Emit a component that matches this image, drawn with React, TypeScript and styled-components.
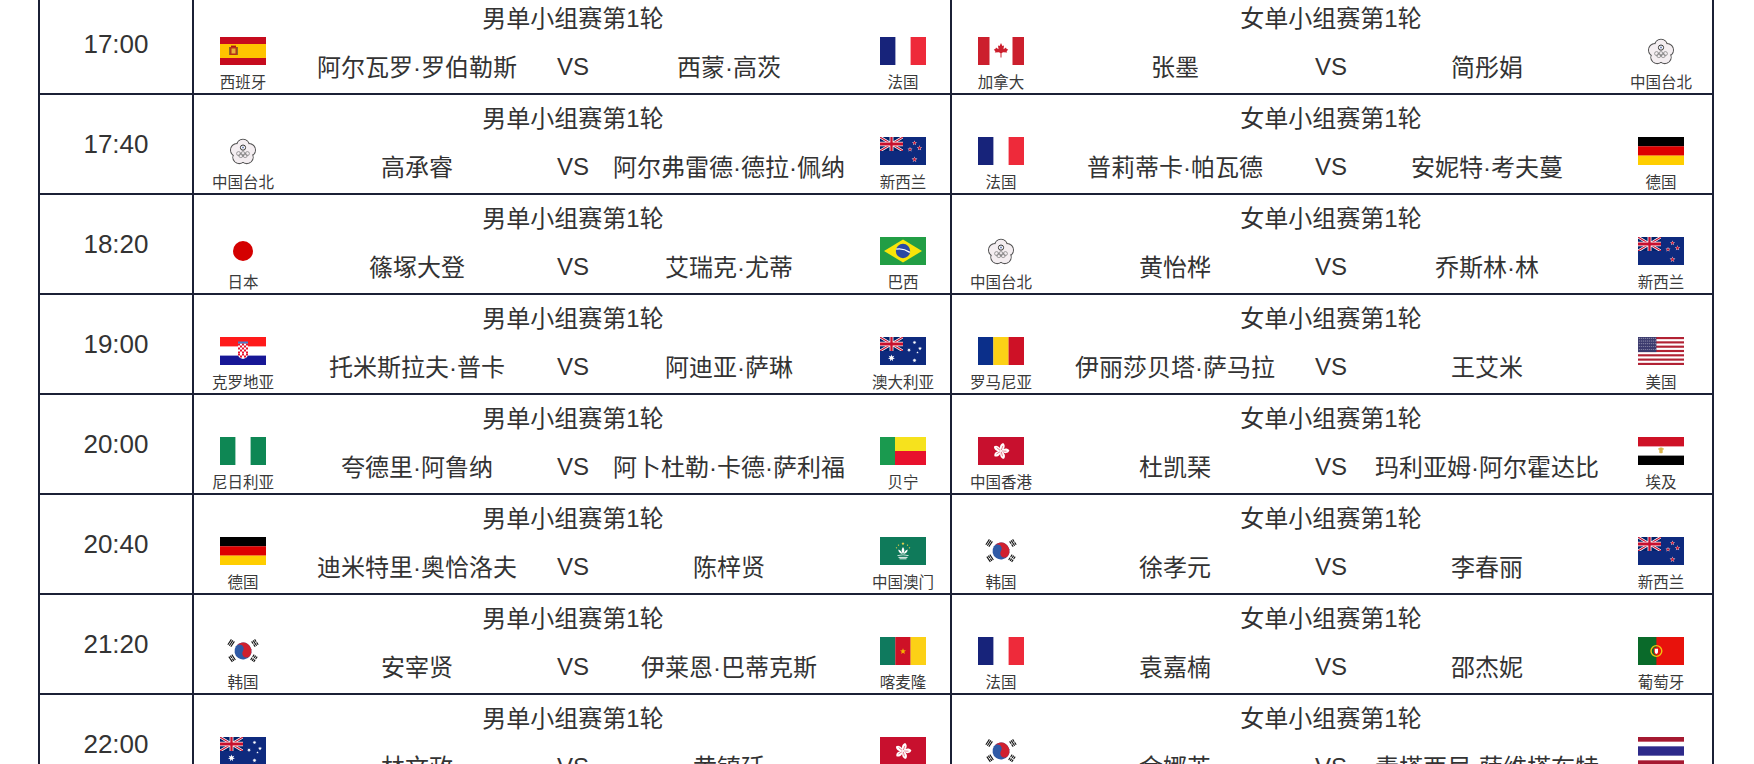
import React from "react";
import styled, { createGlobalStyle } from "styled-components";

const GlobalStyle = createGlobalStyle`
  html, body { margin: 0; padding: 0; background: #ffffff; overflow: hidden; }
  body { font-family: "Liberation Sans", "Noto Sans CJK SC", sans-serif; color: #333333; }
`;

const LINE = "#1b2035";

const Table = styled.div`
  margin: -5px 0 0 38px;
  width: 1676px;
  box-sizing: border-box;
  border-left: 2px solid ${LINE};
  border-right: 2px solid ${LINE};
`;

const Row = styled.div`
  display: grid;
  grid-template-columns: 152px 758px 758px;
  height: 100px;
  box-sizing: border-box;
  border-bottom: 2px solid ${LINE};
`;

const TimeCell = styled.div`
  display: flex;
  align-items: center;
  justify-content: center;
  font-family: "Liberation Sans", Arial, sans-serif;
  font-size: 26px;
  color: #333333;
`;

const MatchCell = styled.div`
  border-left: 2px solid ${LINE};
  display: grid;
  grid-template-columns: 98px 250px 62px 250px 98px;
  grid-template-rows: 42px 56px;
`;

const Title = styled.div`
  grid-column: 2 / 5;
  grid-row: 1;
  display: flex;
  align-items: center;
  justify-content: center;
  font-size: 24px;
  color: #333333;
  white-space: nowrap;
`;

const Name = styled.div<{ $col: number }>`
  grid-column: ${(p) => p.$col};
  grid-row: 2;
  display: flex;
  align-items: center;
  justify-content: center;
  font-size: 24px;
  color: #333333;
  white-space: nowrap;
`;

const Vs = styled(Name)`
  padding-top: 4px;
`;

const FlagCell = styled.div<{ $col: number }>`
  grid-column: ${(p) => p.$col};
  grid-row: 1 / 3;
  display: flex;
  flex-direction: column;
  align-items: center;
  padding-top: 42px;
`;

const FlagBox = styled.div`
  height: 28px;
  display: flex;
  align-items: center;
  justify-content: center;
`;

const Label = styled.div`
  margin-top: 8px;
  font-size: 15.5px;
  line-height: 20px;
  color: #3a3a3a;
  white-space: nowrap;
`;

const FlagSvg = styled.svg`
  display: block;
`;

const star = (cx: number, cy: number, r: number, n = 5, ratio = 0.42) => {
  const pts: string[] = [];
  for (let i = 0; i < n * 2; i++) {
    const a = -Math.PI / 2 + (i * Math.PI) / n;
    const rr = i % 2 === 0 ? r : r * ratio;
    pts.push(`${(cx + rr * Math.cos(a)).toFixed(2)},${(cy + rr * Math.sin(a)).toFixed(2)}`);
  }
  return pts.join(" ");
};

const UnionJack = () => (
  <svg x={0} y={0} width={23} height={14} viewBox="0 0 60 30" preserveAspectRatio="none">
    <rect width={60} height={30} fill="#012169" />
    <path d="M0,0 L60,30 M60,0 L0,30" stroke="#fff" strokeWidth={6} />
    <path d="M0,0 L60,30 M60,0 L0,30" stroke="#C8102E" strokeWidth={2.4} />
    <path d="M30,0 v30 M0,15 h60" stroke="#fff" strokeWidth={10} />
    <path d="M30,0 v30 M0,15 h60" stroke="#C8102E" strokeWidth={6} />
  </svg>
);

const Flag = ({ children }: { children: React.ReactNode }) => (
  <FlagSvg width={46} height={28} viewBox="0 0 46 28">
    {children}
  </FlagSvg>
);

const leafRight: [number, number][] = [
  [24.4, 9], [26, 8.4], [25.5, 12.2], [28, 10.4], [28.6, 12], [30.2, 12.4], [28.6, 14.6], [29.2, 15.6], [25, 15.2], [23.5, 16.2], [23.5, 20.5],
];
const leafPath = (() => {
  const right = leafRight.map(([x, y]) => `${x},${y}`);
  const left = [...leafRight].reverse().map(([x, y]) => `${46 - x},${y}`);
  return ["23,6", ...right, ...left].join(" ");
})();

const trigram = (cx: number, cy: number, rot: number, bars: number[], key: string) => (
  <g key={key} transform={`translate(${cx} ${cy}) rotate(${rot})`} fill="#111">
    {bars.map((solid, i) =>
      solid ? (
        <rect key={i} x={-3.2} y={-2.4 + i * 1.8 - 0.55} width={6.4} height={1.1} />
      ) : (
        <g key={i}>
          <rect x={-3.2} y={-2.4 + i * 1.8 - 0.55} width={2.8} height={1.1} />
          <rect x={0.4} y={-2.4 + i * 1.8 - 0.55} width={2.8} height={1.1} />
        </g>
      )
    )}
  </g>
);

const flags: Record<string, () => React.ReactElement> = {
  西班牙: () => (
    <Flag>
      <rect width={46} height={28} fill="#c60b1e" />
      <rect y={7} width={46} height={14} fill="#ffc400" />
      <rect x={10} y={10} width={7} height={8} fill="#ad1519" opacity={0.85} />
      <rect x={11.5} y={11.5} width={4} height={5} fill="#e8b23a" />
      <rect x={9} y={10} width={1.2} height={8} fill="#8a6a2a" />
      <rect x={16.8} y={10} width={1.2} height={8} fill="#8a6a2a" />
      <rect x={11} y={8.6} width={5} height={1.4} fill="#ad1519" />
    </Flag>
  ),
  法国: () => (
    <Flag>
      <rect width={15.4} height={28} fill="#17237a" />
      <rect x={30.6} width={15.4} height={28} fill="#ee2a3a" />
    </Flag>
  ),
  加拿大: () => (
    <Flag>
      <rect width={11.5} height={28} fill="#cc1f2d" />
      <rect x={34.5} width={11.5} height={28} fill="#cc1f2d" />
      <polygon points={leafPath} fill="#cc1f2d" />
    </Flag>
  ),
  新西兰: () => (
    <Flag>
      <rect width={46} height={28} fill="#0e2a7e" />
      <UnionJack />
      {[
        [34.5, 22.5, 2.4],
        [30, 12.5, 2],
        [34.5, 6, 2],
        [39.5, 11, 2.2],
      ].map(([x, y, r], i) => (
        <g key={i}>
          <polygon points={star(x, y, r + 0.6)} fill="#fff" />
          <polygon points={star(x, y, r)} fill="#c8102e" />
        </g>
      ))}
    </Flag>
  ),
  德国: () => (
    <Flag>
      <rect width={46} height={9.4} fill="#000" />
      <rect y={9.3} width={46} height={9.4} fill="#dd0000" />
      <rect y={18.6} width={46} height={9.4} fill="#ffce00" />
    </Flag>
  ),
  日本: () => (
    <Flag>
      <circle cx={23} cy={14} r={10} fill="#d40000" />
    </Flag>
  ),
  巴西: () => (
    <Flag>
      <rect width={46} height={28} fill="#229e45" />
      <polygon points="4,14 23,2.5 42,14 23,25.5" fill="#f8e509" />
      <circle cx={23} cy={14} r={7.2} fill="#2b49a3" />
      <path d="M16.2,12.2 Q23,10.8 29.8,15.4" stroke="#fff" strokeWidth={1.3} fill="none" />
    </Flag>
  ),
  克罗地亚: () => (
    <Flag>
      <rect width={46} height={9.4} fill="#ff1a1a" />
      <rect y={18.6} width={46} height={9.4} fill="#171796" />
      <rect x={18} y={6.5} width={10} height={10} fill="#fff" />
      {Array.from({ length: 25 }).map((_, i) => {
        const cx = i % 5;
        const cy = Math.floor(i / 5);
        return (cx + cy) % 2 === 0 ? (
          <rect key={i} x={18 + cx * 2} y={6.5 + cy * 2} width={2} height={2} fill="#e8112d" />
        ) : null;
      })}
      <path d="M18,16.5 h10 q0,4.5 -5,5.5 q-5,-1 -5,-5.5 Z" fill="#fff" />
      <rect x={18} y={16.5} width={2} height={2} fill="#e8112d" />
      <rect x={22} y={16.5} width={2} height={2} fill="#e8112d" />
      <rect x={26} y={16.5} width={2} height={2} fill="#e8112d" />
      <rect x={20} y={18.5} width={2} height={2} fill="#e8112d" />
      <rect x={24} y={18.5} width={2} height={2} fill="#e8112d" />
      <rect x={18} y={4.5} width={10} height={2} fill="#4a7cc9" />
    </Flag>
  ),
  澳大利亚: () => (
    <Flag>
      <rect width={46} height={28} fill="#0e2a7e" />
      <UnionJack />
      <polygon points={star(11.5, 21, 3.6, 7, 0.45)} fill="#fff" />
      <polygon points={star(34.5, 23.5, 2.2, 7, 0.45)} fill="#fff" />
      <polygon points={star(29, 13, 2, 7, 0.45)} fill="#fff" />
      <polygon points={star(34.5, 5.5, 2, 7, 0.45)} fill="#fff" />
      <polygon points={star(40, 11.5, 2, 7, 0.45)} fill="#fff" />
      <polygon points={star(37.5, 15.5, 1.2, 5, 0.45)} fill="#fff" />
    </Flag>
  ),
  罗马尼亚: () => (
    <Flag>
      <rect width={15.4} height={28} fill="#0b2f8a" />
      <rect x={15.3} width={15.4} height={28} fill="#fcd116" />
      <rect x={30.6} width={15.4} height={28} fill="#ce1126" />
    </Flag>
  ),
  美国: () => (
    <Flag>
      {Array.from({ length: 13 }).map((_, i) =>
        i % 2 === 0 ? (
          <rect key={i} y={(i * 28) / 13} width={46} height={28 / 13} fill="#b22234" />
        ) : null
      )}
      <rect width={18.4} height={(7 * 28) / 13} fill="#3c3b6e" />
      {Array.from({ length: 45 }).map((_, i) => (
        <circle key={i} cx={1.2 + (i % 9) * 2} cy={1.2 + Math.floor(i / 9) * 2.8} r={0.45} fill="#fff" />
      ))}
    </Flag>
  ),
  尼日利亚: () => (
    <Flag>
      <rect width={15.4} height={28} fill="#0e8754" />
      <rect x={30.6} width={15.4} height={28} fill="#0e8754" />
    </Flag>
  ),
  贝宁: () => (
    <Flag>
      <rect width={46} height={14} fill="#f6e21d" />
      <rect y={14} width={46} height={14} fill="#e8112d" />
      <rect width={15} height={28} fill="#1a9a4f" />
    </Flag>
  ),
  中国香港: () => (
    <Flag>
      <rect width={46} height={28} fill="#c8102e" />
      {[0, 1, 2, 3, 4].map((k) => (
        <g key={k} transform={`rotate(${k * 72 + 18} 23 14)`}>
          <path d="M23,14 C20,11.5 19.8,7.5 22.6,5.6 C25.8,6.8 26,11 23,14 Z" fill="#fff" />
          <path d="M23,13 L23.2,8.5" stroke="#c8102e" strokeWidth={0.5} />
        </g>
      ))}
      <circle cx={23} cy={14} r={0.8} fill="#fff" />
    </Flag>
  ),
  埃及: () => (
    <Flag>
      <rect width={46} height={9.4} fill="#ce1126" />
      <rect y={18.6} width={46} height={9.4} fill="#000" />
      <rect x={21.3} y={10.6} width={3.4} height={5.6} rx={0.8} fill="#d9b44a" />
      <rect x={20.2} y={11.3} width={5.6} height={1.3} fill="#d9b44a" />
    </Flag>
  ),
  中国澳门: () => (
    <Flag>
      <rect width={46} height={28} fill="#0f7a5a" />
      <polygon points={star(23, 6.5, 1.7)} fill="#f8d74a" />
      <polygon points={star(18.5, 8.2, 1)} fill="#f8d74a" />
      <polygon points={star(27.5, 8.2, 1)} fill="#f8d74a" />
      <polygon points={star(16.5, 10.8, 0.9)} fill="#f8d74a" />
      <polygon points={star(29.5, 10.8, 0.9)} fill="#f8d74a" />
      <path d="M23,10 C21.2,12.2 21.2,15 23,17 C24.8,15 24.8,12.2 23,10 Z" fill="#fff" />
      <path d="M22.4,17 C19.5,16.6 18.2,14.5 18.4,12.6 C20.6,13.4 21.8,15 22.4,17 Z" fill="#fff" />
      <path d="M23.6,17 C26.5,16.6 27.8,14.5 27.6,12.6 C25.4,13.4 24.2,15 23.6,17 Z" fill="#fff" />
      <path d="M17.5,18.2 Q23,16.6 28.5,18.2 L28.5,19 Q23,17.6 17.5,19 Z" fill="#fff" />
      <path d="M18.5,20.4 h9 M19.5,21.8 h7" stroke="#fff" strokeWidth={0.9} />
    </Flag>
  ),
  韩国: () => (
    <FlagSvg width={42} height={28} viewBox="0 0 42 28">
      <g transform="translate(21 14) rotate(33.7)">
        <circle r={8.5} fill="#2f5aa6" />
        <path d="M-8.5,0 A8.5,8.5 0 0 1 8.5,0 A4.25,4.25 0 0 1 0,0 A4.25,4.25 0 0 0 -8.5,0 Z" fill="#d0202f" />
      </g>
      {trigram(9.6, 6.4, -56.3, [1, 1, 1], "ul")}
      {trigram(32.4, 21.6, -56.3, [0, 0, 0], "lr")}
      {trigram(32.4, 6.4, 56.3, [0, 1, 0], "ur")}
      {trigram(9.6, 21.6, 56.3, [1, 0, 1], "ll")}
    </FlagSvg>
  ),
  喀麦隆: () => (
    <Flag>
      <rect width={15.4} height={28} fill="#0f7a5e" />
      <rect x={15.3} width={15.4} height={28} fill="#ce1126" />
      <rect x={30.6} width={15.4} height={28} fill="#fcd116" />
      <polygon points={star(23, 14.4, 3.2)} fill="#f5b400" />
    </Flag>
  ),
  葡萄牙: () => (
    <Flag>
      <rect width={46} height={28} fill="#e8120c" />
      <rect width={18.4} height={28} fill="#0a6a2a" />
      <circle cx={18.4} cy={14} r={5.4} fill="none" stroke="#f2c40f" strokeWidth={1.4} />
      <path d="M15.8,10.8 h5.2 v4.4 q0,2.6 -2.6,3 q-2.6,-0.4 -2.6,-3 Z" fill="#e8120c" />
      <path d="M16.8,11.8 h3.2 v3.2 q0,1.6 -1.6,2 q-1.6,-0.4 -1.6,-2 Z" fill="#fff" />
    </Flag>
  ),
  泰国: () => (
    <Flag>
      <rect width={46} height={4.67} fill="#a51931" />
      <rect y={9.33} width={46} height={9.34} fill="#2d2a8a" />
      <rect y={23.33} width={46} height={4.67} fill="#a51931" />
    </Flag>
  ),
  中国台北: () => (
    <FlagSvg width={30} height={27} viewBox="0 0 30 27">
      {[0, 1, 2, 3, 4].map((k) => {
        const a = (-90 + k * 72) * (Math.PI / 180);
        return (
          <circle key={k} cx={15 + 6.4 * Math.cos(a)} cy={14 + 6.4 * Math.sin(a)} r={6.4} fill="#efe7ec" stroke="#555" strokeWidth={1.1} />
        );
      })}
      {[0, 1, 2, 3, 4].map((k) => {
        const a = (-90 + k * 72) * (Math.PI / 180);
        return <circle key={`f${k}`} cx={15 + 6.4 * Math.cos(a)} cy={14 + 6.4 * Math.sin(a)} r={5.8} fill="#f4eef1" />;
      })}
      <circle cx={15} cy={14} r={5} fill="#f4eef1" />
      <circle cx={15} cy={9.6} r={2.6} fill="#fff" stroke="#333" strokeWidth={1} />
      <circle cx={15} cy={9.6} r={1} fill="#6d7fb5" />
      {[
        [10.6, 15.6],
        [15, 15.6],
        [19.4, 15.6],
        [12.8, 17.6],
        [17.2, 17.6],
      ].map(([x, y], i) => (
        <circle key={`r${i}`} cx={x} cy={y} r={2} fill="none" stroke="#777" strokeWidth={0.7} />
      ))}
    </FlagSvg>
  ),
};

type Side = { country: string; player: string };
type Match = { title: string; left: Side; right: Side };
type Slot = { time: string; men: Match; women: Match };

const M = "男单小组赛第1轮";
const W = "女单小组赛第1轮";

const slots: Slot[] = [
  {
    time: "17:00",
    men: { title: M, left: { country: "西班牙", player: "阿尔瓦罗·罗伯勒斯" }, right: { country: "法国", player: "西蒙·高茨" } },
    women: { title: W, left: { country: "加拿大", player: "张墨" }, right: { country: "中国台北", player: "简彤娟" } },
  },
  {
    time: "17:40",
    men: { title: M, left: { country: "中国台北", player: "高承睿" }, right: { country: "新西兰", player: "阿尔弗雷德·德拉·佩纳" } },
    women: { title: W, left: { country: "法国", player: "普莉蒂卡·帕瓦德" }, right: { country: "德国", player: "安妮特·考夫蔓" } },
  },
  {
    time: "18:20",
    men: { title: M, left: { country: "日本", player: "篠塚大登" }, right: { country: "巴西", player: "艾瑞克·尤蒂" } },
    women: { title: W, left: { country: "中国台北", player: "黄怡桦" }, right: { country: "新西兰", player: "乔斯林·林" } },
  },
  {
    time: "19:00",
    men: { title: M, left: { country: "克罗地亚", player: "托米斯拉夫·普卡" }, right: { country: "澳大利亚", player: "阿迪亚·萨琳" } },
    women: { title: W, left: { country: "罗马尼亚", player: "伊丽莎贝塔·萨马拉" }, right: { country: "美国", player: "王艾米" } },
  },
  {
    time: "20:00",
    men: { title: M, left: { country: "尼日利亚", player: "夸德里·阿鲁纳" }, right: { country: "贝宁", player: "阿卜杜勒·卡德·萨利福" } },
    women: { title: W, left: { country: "中国香港", player: "杜凯琹" }, right: { country: "埃及", player: "玛利亚姆·阿尔霍达比" } },
  },
  {
    time: "20:40",
    men: { title: M, left: { country: "德国", player: "迪米特里·奥恰洛夫" }, right: { country: "中国澳门", player: "陈梓贤" } },
    women: { title: W, left: { country: "韩国", player: "徐孝元" }, right: { country: "新西兰", player: "李春丽" } },
  },
  {
    time: "21:20",
    men: { title: M, left: { country: "韩国", player: "安宰贤" }, right: { country: "喀麦隆", player: "伊莱恩·巴蒂克斯" } },
    women: { title: W, left: { country: "法国", player: "袁嘉楠" }, right: { country: "葡萄牙", player: "邵杰妮" } },
  },
  {
    time: "22:00",
    men: { title: M, left: { country: "澳大利亚", player: "林文政" }, right: { country: "中国香港", player: "黄镇廷" } },
    women: { title: W, left: { country: "韩国", player: "金娜英" }, right: { country: "泰国", player: "素塔西尼·萨维塔布特" } },
  },
];

const FlagWithLabel = ({ country, col }: { country: string; col: number }) => {
  const Draw = flags[country];
  return (
    <FlagCell $col={col}>
      <FlagBox>{Draw ? <Draw /> : null}</FlagBox>
      <Label>{country}</Label>
    </FlagCell>
  );
};

const MatchView = ({ match }: { match: Match }) => (
  <MatchCell>
    <FlagWithLabel country={match.left.country} col={1} />
    <Title>{match.title}</Title>
    <Name $col={2}>{match.left.player}</Name>
    <Vs $col={3}>VS</Vs>
    <Name $col={4}>{match.right.player}</Name>
    <FlagWithLabel country={match.right.country} col={5} />
  </MatchCell>
);

export default function App() {
  return (
    <>
      <GlobalStyle />
      <Table>
        {slots.map((s) => (
          <Row key={s.time}>
            <TimeCell>{s.time}</TimeCell>
            <MatchView match={s.men} />
            <MatchView match={s.women} />
          </Row>
        ))}
      </Table>
    </>
  );
}
